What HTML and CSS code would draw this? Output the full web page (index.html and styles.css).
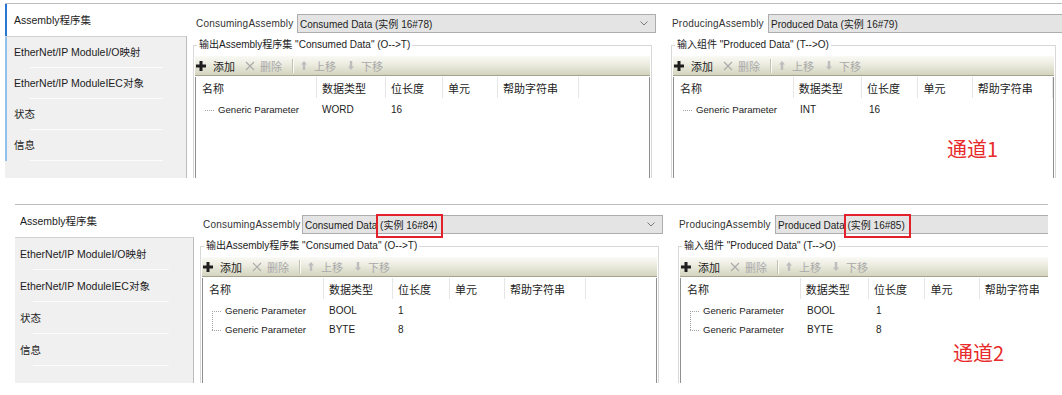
FILE: index.html
```html
<!DOCTYPE html>
<html lang="zh-CN">
  <head>
    <meta charset="UTF-8" />
    <meta name="viewport" content="width=device-width, initial-scale=1.0" />
    <title>EtherNet/IP Assembly 通道</title>
    <link rel="stylesheet" href="styles.css">
  </head>
  <body>
    <!-- 通道1 -->
    <div class="shot shot-top">
      <div class="tabs">
        <div class="tab tab-active">Assembly程序集</div>
        <div class="tab-list">
          <div class="tab">EtherNet/IP ModuleI/O映射</div>
          <div class="tab">EtherNet/IP ModuleIEC对象</div>
          <div class="tab">状态</div>
          <div class="tab">信息</div>
        </div>
      </div>

      <div class="editor">
        <div class="side side-consume">
          <div class="assembly-row">
            <span class="assembly-label">ConsumingAssembly</span>
            <div class="combo">
              <span>Consumed Data (实例 16#78)</span>
              <svg class="chevron" viewBox="0 0 8 5" width="8" height="5"><path d="M0.5 0.5L4 4L7.5 0.5" fill="none" stroke="#7a7a7a" stroke-width="1"/></svg>
            </div>
          </div>
          <fieldset class="group">
            <legend>输出Assembly程序集 "Consumed Data" (O--&gt;T)</legend>
            <div class="toolbar">
              <span class="tool"><svg viewBox="0 0 10 10" width="10" height="10"><path d="M3.5 0h3v3.5H10v3H6.5V10h-3V6.5H0v-3h3.5z" fill="#1e1e1e"/></svg>添加</span>
              <span class="tool tool-off tool-del"><svg viewBox="0 0 10 10" width="10" height="10"><path d="M1 1l8 8M9 1l-8 8" stroke="#ababab" stroke-width="1.2"/></svg>删除</span>
              <span class="tool-sep"></span>
              <span class="tool tool-off"><svg viewBox="0 0 6 9" width="6" height="9"><path d="M3 0l3 3.6H4.2V9H1.8V3.6H0z" fill="#bdbdbd"/></svg>上移</span>
              <span class="tool tool-off tool-down"><svg viewBox="0 0 6 9" width="6" height="9"><path d="M3 9l3-3.6H4.2V0H1.8v5.4H0z" fill="#bdbdbd"/></svg>下移</span>
            </div>
            <div class="grid">
              <div class="grid-head">
                <div class="cell c-name">名称</div>
                <div class="cell c-type">数据类型</div>
                <div class="cell c-bits">位长度</div>
                <div class="cell c-unit">单元</div>
                <div class="cell c-help">帮助字符串</div>
              </div>
              <div class="grid-body">
                <div class="grid-row">
                  <div class="cell c-name tree-item">Generic Parameter</div>
                  <div class="cell c-type">WORD</div>
                  <div class="cell c-bits">16</div>
                </div>
              </div>
            </div>
          </fieldset>
        </div>

        <div class="side side-produce">
          <div class="assembly-row">
            <span class="assembly-label">ProducingAssembly</span>
            <div class="combo">
              <span>Produced Data (实例 16#79)</span>
            </div>
          </div>
          <fieldset class="group">
            <legend>输入组件 "Produced Data" (T--&gt;O)</legend>
            <div class="toolbar">
              <span class="tool"><svg viewBox="0 0 10 10" width="10" height="10"><path d="M3.5 0h3v3.5H10v3H6.5V10h-3V6.5H0v-3h3.5z" fill="#1e1e1e"/></svg>添加</span>
              <span class="tool tool-off tool-del"><svg viewBox="0 0 10 10" width="10" height="10"><path d="M1 1l8 8M9 1l-8 8" stroke="#ababab" stroke-width="1.2"/></svg>删除</span>
              <span class="tool-sep"></span>
              <span class="tool tool-off"><svg viewBox="0 0 6 9" width="6" height="9"><path d="M3 0l3 3.6H4.2V9H1.8V3.6H0z" fill="#bdbdbd"/></svg>上移</span>
              <span class="tool tool-off tool-down"><svg viewBox="0 0 6 9" width="6" height="9"><path d="M3 9l3-3.6H4.2V0H1.8v5.4H0z" fill="#bdbdbd"/></svg>下移</span>
            </div>
            <div class="grid">
              <div class="grid-head">
                <div class="cell c-name">名称</div>
                <div class="cell c-type">数据类型</div>
                <div class="cell c-bits">位长度</div>
                <div class="cell c-unit">单元</div>
                <div class="cell c-help">帮助字符串</div>
              </div>
              <div class="grid-body">
                <div class="grid-row">
                  <div class="cell c-name tree-item">Generic Parameter</div>
                  <div class="cell c-type">INT</div>
                  <div class="cell c-bits">16</div>
                </div>
              </div>
              <div class="channel">通道1</div>
            </div>
          </fieldset>
        </div>
      </div>
    </div>

    <!-- 通道2 -->
    <div class="shot shot-bottom">
      <div class="tabs">
        <div class="tab tab-active">Assembly程序集</div>
        <div class="tab-list">
          <div class="tab">EtherNet/IP ModuleI/O映射</div>
          <div class="tab">EtherNet/IP ModuleIEC对象</div>
          <div class="tab">状态</div>
          <div class="tab">信息</div>
        </div>
      </div>

      <div class="editor">
        <div class="side side-consume">
          <div class="assembly-row">
            <span class="assembly-label">ConsumingAssembly</span>
            <div class="combo">
              <span>Consumed Data <span class="mark">(实例 16#84)</span></span>
              <svg class="chevron" viewBox="0 0 8 5" width="8" height="5"><path d="M0.5 0.5L4 4L7.5 0.5" fill="none" stroke="#7a7a7a" stroke-width="1"/></svg>
            </div>
          </div>
          <fieldset class="group">
            <legend>输出Assembly程序集 "Consumed Data" (O--&gt;T)</legend>
            <div class="toolbar">
              <span class="tool"><svg viewBox="0 0 10 10" width="10" height="10"><path d="M3.5 0h3v3.5H10v3H6.5V10h-3V6.5H0v-3h3.5z" fill="#1e1e1e"/></svg>添加</span>
              <span class="tool tool-off tool-del"><svg viewBox="0 0 10 10" width="10" height="10"><path d="M1 1l8 8M9 1l-8 8" stroke="#ababab" stroke-width="1.2"/></svg>删除</span>
              <span class="tool-sep"></span>
              <span class="tool tool-off"><svg viewBox="0 0 6 9" width="6" height="9"><path d="M3 0l3 3.6H4.2V9H1.8V3.6H0z" fill="#bdbdbd"/></svg>上移</span>
              <span class="tool tool-off tool-down"><svg viewBox="0 0 6 9" width="6" height="9"><path d="M3 9l3-3.6H4.2V0H1.8v5.4H0z" fill="#bdbdbd"/></svg>下移</span>
            </div>
            <div class="grid">
              <div class="grid-head">
                <div class="cell c-name">名称</div>
                <div class="cell c-type">数据类型</div>
                <div class="cell c-bits">位长度</div>
                <div class="cell c-unit">单元</div>
                <div class="cell c-help">帮助字符串</div>
              </div>
              <div class="grid-body">
                <div class="grid-row">
                  <div class="cell c-name tree-item">Generic Parameter</div>
                  <div class="cell c-type">BOOL</div>
                  <div class="cell c-bits">1</div>
                </div>
                <div class="grid-row">
                  <div class="cell c-name tree-item">Generic Parameter</div>
                  <div class="cell c-type">BYTE</div>
                  <div class="cell c-bits">8</div>
                </div>
              </div>
            </div>
          </fieldset>
        </div>

        <div class="side side-produce">
          <div class="assembly-row">
            <span class="assembly-label">ProducingAssembly</span>
            <div class="combo">
              <span>Produced Data <span class="mark">(实例 16#85)</span></span>
            </div>
          </div>
          <fieldset class="group">
            <legend>输入组件 "Produced Data" (T--&gt;O)</legend>
            <div class="toolbar">
              <span class="tool"><svg viewBox="0 0 10 10" width="10" height="10"><path d="M3.5 0h3v3.5H10v3H6.5V10h-3V6.5H0v-3h3.5z" fill="#1e1e1e"/></svg>添加</span>
              <span class="tool tool-off tool-del"><svg viewBox="0 0 10 10" width="10" height="10"><path d="M1 1l8 8M9 1l-8 8" stroke="#ababab" stroke-width="1.2"/></svg>删除</span>
              <span class="tool-sep"></span>
              <span class="tool tool-off"><svg viewBox="0 0 6 9" width="6" height="9"><path d="M3 0l3 3.6H4.2V9H1.8V3.6H0z" fill="#bdbdbd"/></svg>上移</span>
              <span class="tool tool-off tool-down"><svg viewBox="0 0 6 9" width="6" height="9"><path d="M3 9l3-3.6H4.2V0H1.8v5.4H0z" fill="#bdbdbd"/></svg>下移</span>
            </div>
            <div class="grid">
              <div class="grid-head">
                <div class="cell c-name">名称</div>
                <div class="cell c-type">数据类型</div>
                <div class="cell c-bits">位长度</div>
                <div class="cell c-unit">单元</div>
                <div class="cell c-help">帮助字符串</div>
              </div>
              <div class="grid-body">
                <div class="grid-row">
                  <div class="cell c-name tree-item">Generic Parameter</div>
                  <div class="cell c-type">BOOL</div>
                  <div class="cell c-bits">1</div>
                </div>
                <div class="grid-row">
                  <div class="cell c-name tree-item">Generic Parameter</div>
                  <div class="cell c-type">BYTE</div>
                  <div class="cell c-bits">8</div>
                </div>
              </div>
              <div class="channel">通道2</div>
            </div>
          </fieldset>
        </div>
      </div>
    </div>
  </body>
</html>
```

FILE: styles.css
```css
* {
  box-sizing: border-box;
}

body {
  margin: 0;
  background: #fff;
  font-family: "Liberation Sans", "Noto Sans CJK SC", sans-serif;
  font-size: 10px;
  color: #1c1c1c;
}

/* one captured window */
.shot {
  display: flex;
  overflow: hidden;
  border-top: 1px solid #bdbdbd;
}

.shot-top {
  margin: 3px 0 0 5px;
  width: 1057px;
  height: 175px;
}

.shot-bottom {
  margin: 26px 0 0 15px;
  width: 1033px;
  height: 179px;
}

/* left tab column */
.tabs {
  flex: none;
  width: 182px;
  display: flex;
  flex-direction: column;
}

.shot-bottom .tabs {
  width: 179px;
}

.tab {
  position: relative;
  height: 31px;
  display: flex;
  align-items: center;
  padding: 0 0 2px 9px;
  font-size: 10.5px;
  white-space: nowrap;
}

.shot-bottom .tab {
  height: 32px;
  padding-left: 5px;
}

.tab-active {
  height: 32px;
  background: #fff;
}

.tab-list {
  flex: 1;
  background: #f0f0f0;
  border-top: 1px solid #d2d2d2;
  border-right: 1px solid #bcbcbc;
}

.tab-list .tab::after {
  content: "";
  position: absolute;
  left: 23px;
  right: 23px;
  bottom: 0;
  border-bottom: 1px solid #fcfcfc;
}

.shot-bottom .tab-list .tab::after {
  left: 18px;
  right: 24px;
}

.shot-top .tab {
  border-left: 2px solid #92c1ef;
  padding-left: 7px;
}

.shot-top .tab-active {
  border-left-color: #2a77d3;
}

/* right part */
.editor {
  flex: 1;
  min-width: 0;
  display: flex;
  overflow: hidden;
}

.side {
  flex: none;
  width: 480px;
}

.side-produce {
  width: 420px;
}

.assembly-row {
  display: flex;
  align-items: center;
  margin: 10px 0 0 9px;
}

.side-produce .assembly-row {
  margin-left: 5px;
}

.assembly-label {
  flex: none;
  width: 101px;
  color: #333;
  letter-spacing: 0.2px;
  white-space: nowrap;
}

.side-produce .assembly-label {
  width: 96px;
}

.shot-bottom .side-consume .assembly-label {
  width: 99px;
}

.combo {
  flex: none;
  width: 359px;
  height: 19px;
  display: flex;
  align-items: center;
  justify-content: space-between;
  padding: 0 7px 0 2px;
  background: #e4e4e4;
  border: 1px solid #adadad;
  white-space: nowrap;
}

.shot-bottom .side-consume .combo {
  width: 361px;
}

.side-produce .combo {
  width: 420px;
}

.chevron {
  display: block;
}

/* red marking round the instance number */
.mark {
  position: relative;
}

.mark::after {
  content: "";
  position: absolute;
  left: -4px;
  right: -6px;
  top: -6px;
  bottom: -7px;
  border: 2px solid #e2222b;
}

/* group box */
.group {
  margin: 5px 0 0 6px;
  width: 459px;
  min-width: 0;
  padding: 4px 1px 0;
  border: 1px solid #d8d8d8;
  border-bottom: 0;
}

.side-produce .group {
  margin-left: 4px;
  width: 385px;
}

.group legend {
  padding: 0 2px;
  margin-left: 2px;
  line-height: 14px;
  color: #222;
  white-space: nowrap;
}

.toolbar {
  height: 20px;
  display: flex;
  align-items: center;
  gap: 10px;
  padding-left: 1px;
  background: linear-gradient(#fafaf6, #ededE2 40%, #d4d4bf);
  border-bottom: 1px solid #a3a38f;
  font-size: 11px;
  color: #222;
}

.tool {
  display: flex;
  align-items: center;
  gap: 7px;
  white-space: nowrap;
}

.tool svg {
  display: block;
}

.tool-off {
  color: #a9a9a9;
}

.tool-del {
  gap: 5px;
}

.tool-down {
  margin-left: 2px;
}

.tool-sep {
  width: 2px;
  height: 14px;
  margin-right: -3px;
  border-left: 1px solid #c2c2b2;
  border-right: 1px solid #fbfbf7;
}

/* list */
.grid {
  position: relative;
  height: 150px;
  background: #fff;
  border: 1px solid #8f9090;
  border-top: 0;
}

.grid-head,
.grid-row {
  display: flex;
}

.grid-head {
  height: 21px;
  margin-top: 1px;
  font-size: 11px;
  color: #222;
}

.grid-body {
  padding-top: 2px;
}

.grid-row {
  height: 19px;
}

.cell {
  display: flex;
  align-items: center;
  padding-left: 5px;
  white-space: nowrap;
}

.grid-head .cell {
  border-right: 1px solid #e6e6e6;
}

.c-name {
  width: 121px;
  padding-left: 6px;
}

.c-type {
  width: 69px;
}

.c-bits {
  width: 57px;
}

.c-unit {
  width: 55px;
}

.c-help {
  width: 81px;
}

.tree-item {
  position: relative;
  padding-left: 22px;
  font-size: 9.6px;
}

.tree-item::before {
  content: "";
  position: absolute;
  left: 9px;
  top: 50%;
  width: 9px;
  border-top: 1px dotted #a3a3a3;
}

.grid-row + .grid-row .tree-item::after {
  content: "";
  position: absolute;
  left: 9px;
  top: -9px;
  height: 19px;
  border-left: 1px dotted #a3a3a3;
}

.channel {
  position: absolute;
  left: 273px;
  top: 62px;
  font-family: "Noto Sans CJK SC", sans-serif;
  font-size: 20px;
  line-height: 1;
  color: #e92a2a;
}

.shot-bottom .channel {
  left: 272px;
  top: 65px;
}
```
